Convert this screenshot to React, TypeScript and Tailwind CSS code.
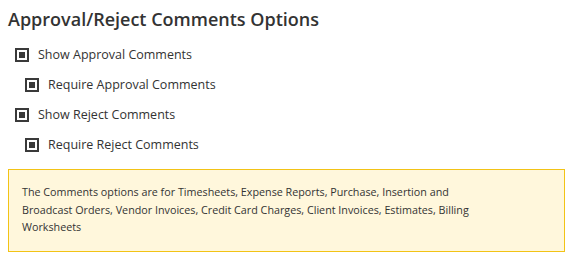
import { useState } from 'react';

type Opt = { id: string; label: string; nested?: boolean };

const options: Opt[] = [
  { id: 'showApproval', label: 'Show Approval Comments' },
  { id: 'requireApproval', label: 'Require Approval Comments', nested: true },
  { id: 'showReject', label: 'Show Reject Comments' },
  { id: 'requireReject', label: 'Require Reject Comments', nested: true },
];

function Box({ checked }: { checked: boolean }) {
  return (
    <span className="flex h-[14px] w-[14px] items-center justify-center border-2 border-[#3a3a3a] bg-white">
      {checked && <span className="h-[6px] w-[6px] bg-[#3a3a3a]" />}
    </span>
  );
}

export default function App() {
  const [values, setValues] = useState<Record<string, boolean>>({
    showApproval: true,
    requireApproval: true,
    showReject: true,
    requireReject: true,
  });

  const toggle = (id: string) => setValues(prev => ({ ...prev, [id]: !prev[id] }));

  return (
    <div className="w-[583px] h-[258px] bg-white px-2 pt-[6px] font-['Open_Sans',sans-serif] text-[#333]">
      {/* Header */}
      <h2 className="text-[18px] leading-[26px] font-semibold">Approval/Reject Comments Options</h2>

      {/* Options */}
      <div className="mt-[16px] flex flex-col gap-[16px]">
        {options.map(o => (
          <label
            key={o.id}
            onClick={() => toggle(o.id)}
            className={`flex cursor-pointer items-center gap-[9px] text-[12.5px] leading-[14px] ${o.nested ? 'pl-[17px]' : 'pl-[7px]'}`}
          >
            <Box checked={values[o.id]} />
            <span>{o.label}</span>
          </label>
        ))}
      </div>

      {/* Info box */}
      <div className="mt-[17px] w-[557px] border border-[#f2c316] bg-[#fff7dc] px-[13px] py-[14px] text-[10.75px] leading-[17.5px]">
        <p className="max-w-[460px]">
          The Comments options are for Timesheets, Expense Reports, Purchase, Insertion and Broadcast Orders, Vendor
          Invoices, Credit Card Charges, Client Invoices, Estimates, Billing Worksheets
        </p>
      </div>
    </div>
  );
}
